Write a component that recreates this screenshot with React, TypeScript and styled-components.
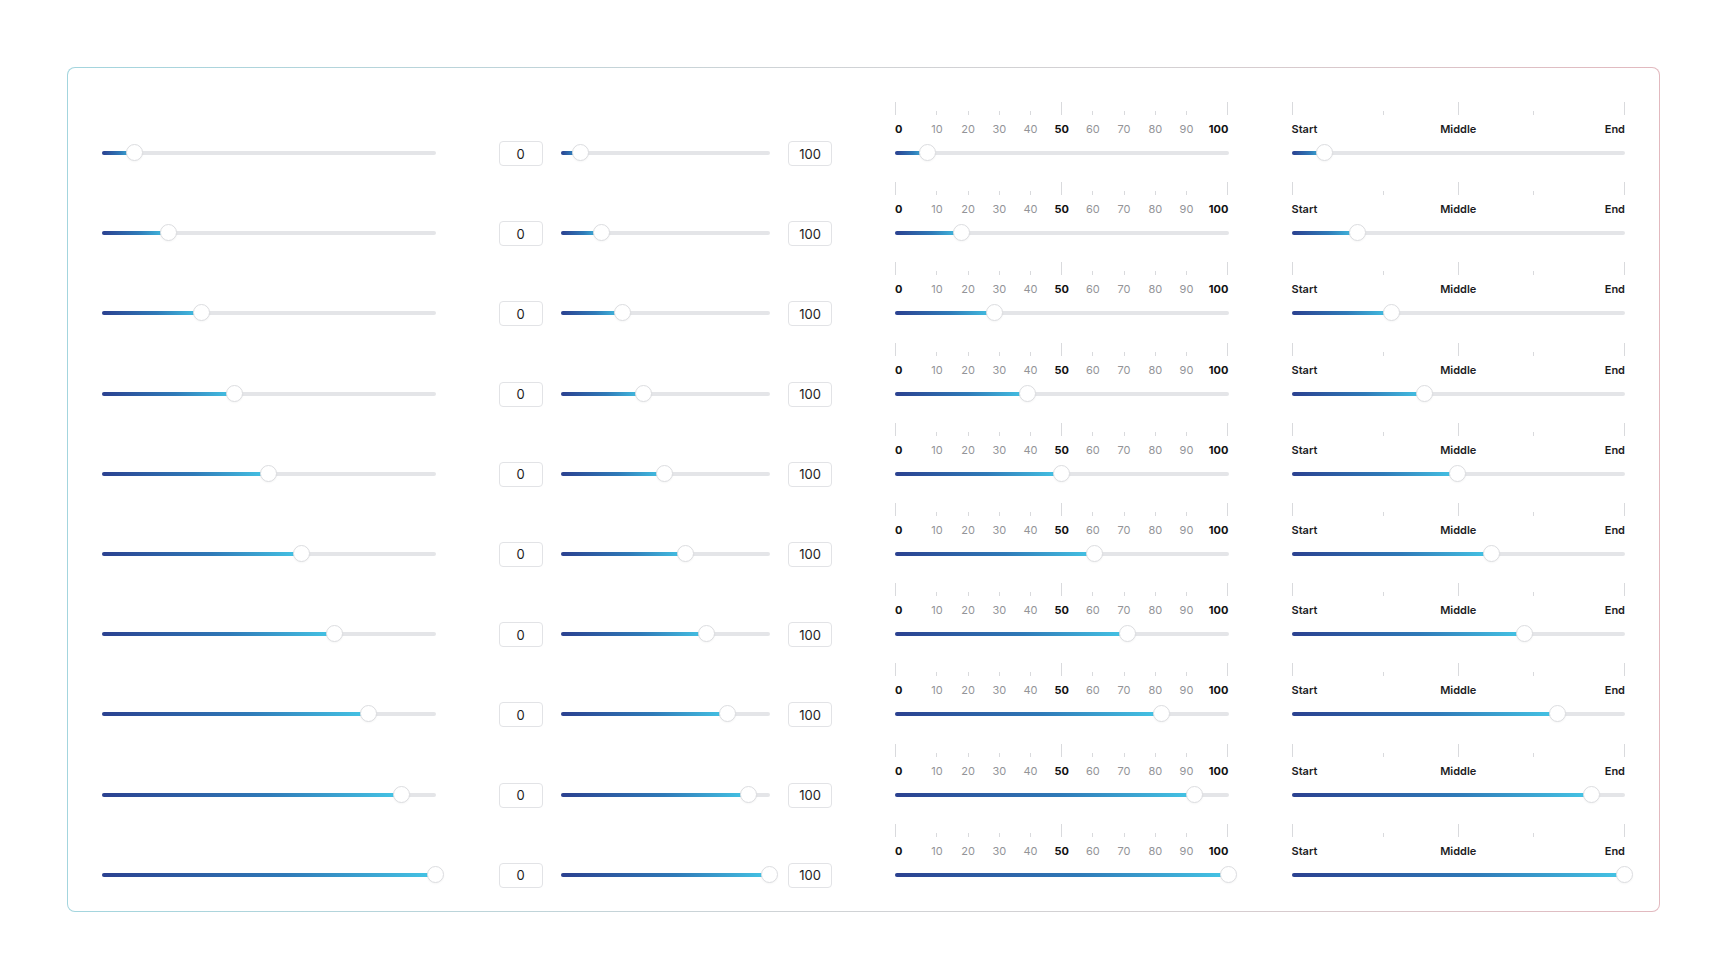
import styled, { createGlobalStyle } from 'styled-components';

const GlobalStyle = createGlobalStyle`
  html, body {
    margin: 0;
    padding: 0;
    background: #ffffff;
    font-family: Inter, "Noto Sans", "Liberation Sans", sans-serif;
  }
`;

const values = [10, 20, 30, 40, 50, 60, 70, 80, 90, 100];
const scale = [0, 10, 20, 30, 40, 50, 60, 70, 80, 90, 100];
const steps = ['Start', '', 'Middle', '', 'End'];

const Page = styled.div`
  width: 1728px;
  height: 980px;
  padding: 67px 68px 0 67px;
  box-sizing: border-box;
`;

const Panel = styled.div`
  width: 1593px;
  height: 845px;
  box-sizing: border-box;
  border: 1px solid transparent;
  border-radius: 8px;
  background:
    linear-gradient(#ffffff, #ffffff) padding-box,
    linear-gradient(90deg, #a3d5de 0%, #cfd3d6 45%, #d4d0d2 70%, #e2b9bf 100%) border-box;
  padding: 34px 34px 0 34px;
  display: grid;
  grid-template-columns: repeat(4, 1fr);
  column-gap: 63px;
`;

const Column = styled.div`
  display: flex;
  flex-direction: column;
  gap: 20.2px;
`;

const Row = styled.div`
  height: 60px;
  display: grid;
  align-content: end;
`;

const InputRow = styled.div`
  height: 60px;
  display: flex;
  align-items: flex-end;
  gap: 18px;
`;

const Track = styled.div`
  position: relative;
  flex: 1 1 0;
  min-width: 0;
  height: 18px;
  &::before {
    content: '';
    position: absolute;
    left: 0;
    right: 0;
    top: 7px;
    height: 4px;
    border-radius: 2px;
    background: #e4e5e8;
  }
`;

const Fill = styled.div`
  position: absolute;
  left: 0;
  top: 7px;
  height: 4px;
  border-radius: 2px;
  background: linear-gradient(90deg, #2b4190 0%, #2f7ab8 55%, #45c6e6 100%);
`;

const Thumb = styled.div`
  position: absolute;
  top: 0;
  width: 17px;
  height: 17px;
  margin-left: -9px;
  border-radius: 50%;
  background: #ffffff;
  border: 1px solid #dcdde0;
  box-sizing: border-box;
  box-shadow: 0 1px 2px rgba(0, 0, 0, 0.04);
`;

const ValueBox = styled.div`
  width: 44px;
  height: 25px;
  margin-bottom: -4px;
  box-sizing: border-box;
  border: 1px solid #e2e3e6;
  border-radius: 4px;
  display: flex;
  align-items: center;
  justify-content: center;
  font-size: 13px;
  color: #1c1c1e;
`;

/* tick row: the two end marks get a fixed width so the inner marks sit on an inset scale */
const Scale = styled.div`
  display: flex;
  justify-content: space-between;
  margin-bottom: 8px;
`;

const Mark = styled.div<{ $align: 'flex-start' | 'center' | 'flex-end'; $width: number }>`
  width: ${p => p.$width}px;
  flex: none;
  display: flex;
  flex-direction: column;
  align-items: ${p => p.$align};
  gap: 7px;
  white-space: nowrap;
`;

const Tick = styled.div<{ $major: boolean }>`
  width: 1px;
  height: 13px;
  display: flex;
  align-items: flex-end;
  &::after {
    content: '';
    width: 1px;
    height: ${p => (p.$major ? '13px' : '4px')};
    background: #d9dadd;
  }
`;

const MarkLabel = styled.span<{ $strong: boolean }>`
  font-size: 11px;
  line-height: 14px;
  font-weight: ${p => (p.$strong ? 700 : 400)};
  color: ${p => (p.$strong ? '#111111' : '#939498')};
`;

const StepLabel = styled.span`
  font-size: 11px;
  line-height: 14px;
  font-weight: 600;
  color: #1b1b1d;
  min-height: 14px;
`;

function Slider({ value }: { value: number }) {
  return (
    <Track>
      <Fill style={{ width: `${value}%` }} />
      <Thumb style={{ left: `${value}%` }} />
    </Track>
  );
}

function align(i: number, n: number) {
  if (i === 0) return 'flex-start';
  if (i === n - 1) return 'flex-end';
  return 'center';
}

function edge(i: number, n: number, inset: number) {
  return i === 0 || i === n - 1 ? inset : 0;
}

export default function App() {
  return (
    <>
      <GlobalStyle />
      <Page>
        <Panel>
          <Column>
            {values.map(v => (
              <Row key={v}>
                <Slider value={v} />
              </Row>
            ))}
          </Column>

          <Column>
            {values.map(v => (
              <InputRow key={v}>
                <ValueBox>0</ValueBox>
                <Slider value={v} />
                <ValueBox>100</ValueBox>
              </InputRow>
            ))}
          </Column>

          <Column>
            {values.map(v => (
              <Row key={v}>
                <Scale>
                  {scale.map((s, i) => (
                    <Mark key={s} $align={align(i, scale.length)} $width={edge(i, scale.length, 10.75)}>
                      <Tick $major={s % 50 === 0} />
                      <MarkLabel $strong={s % 50 === 0}>{s}</MarkLabel>
                    </Mark>
                  ))}
                </Scale>
                <Slider value={v} />
              </Row>
            ))}
          </Column>

          <Column>
            {values.map(v => (
              <Row key={v}>
                <Scale>
                  {steps.map((s, i) => (
                    <Mark key={i} $align={align(i, steps.length)} $width={edge(i, steps.length, 17)}>
                      <Tick $major={s !== ''} />
                      <StepLabel>{s}</StepLabel>
                    </Mark>
                  ))}
                </Scale>
                <Slider value={v} />
              </Row>
            ))}
          </Column>
        </Panel>
      </Page>
    </>
  );
}
